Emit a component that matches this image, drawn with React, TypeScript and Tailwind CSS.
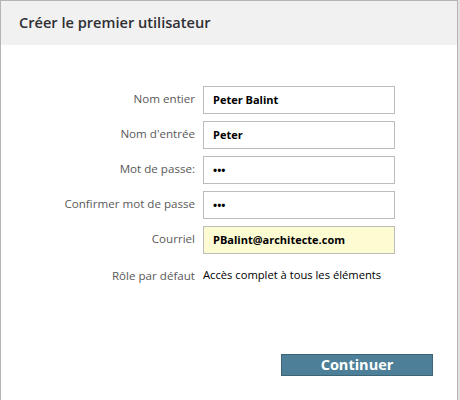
const rows = [
  { label: "Nom entier", value: "Peter Balint" },
  { label: "Nom d'entrée", value: "Peter" },
  { label: "Mot de passe:", value: "•••" },
  { label: "Confirmer mot de passe", value: "•••" },
  { label: "Courriel", value: "PBalint@architecte.com", highlight: true },
]

export default function App() {
  return (
    <div className="min-h-screen bg-[#e2e2e2]" style={{ fontFamily: '"Open Sans", sans-serif' }}>
      <div className="w-[458px] h-[400px] border border-b-0 border-[#b4b4b4] bg-white flex flex-col">
        <div className="h-[44px] bg-[#f1f1f1] flex items-center pl-[18px]">
          <h1 className="text-[14.6px] font-semibold text-[#2e2e33]">Créer le premier utilisateur</h1>
        </div>

        <form className="flex flex-col gap-[7px] pt-[41px]">
          {rows.map((r) => (
            <div key={r.label} className="flex items-center">
              <label className="w-[202px] text-right text-[11.6px] text-[#595959] pr-[8px] -mt-[3px]">{r.label}</label>
              <div
                className={
                  "w-[192px] h-[28px] border border-[#bcbcbc] flex items-center pl-[9px] text-[11px] font-bold text-black " +
                  (r.highlight ? "bg-[#fdfbd2]" : "bg-white")
                }
              >
                {r.value}
              </div>
            </div>
          ))}
          <div className="flex items-center mt-[6px]">
            <span className="w-[202px] text-right text-[11.6px] text-[#595959] pr-[8px]">Rôle par défaut</span>
            <span className="text-[11.2px] text-black">Accès complet à tous les éléments</span>
          </div>
        </form>

        <div className="flex justify-end pr-[24px] mt-[70px]">
          <button
            type="button"
            className="w-[152px] h-[22px] bg-[#4d8098] border border-[#3e6478] text-white text-[14.5px] font-bold leading-none"
          >
            Continuer
          </button>
        </div>
      </div>
    </div>
  )
}
